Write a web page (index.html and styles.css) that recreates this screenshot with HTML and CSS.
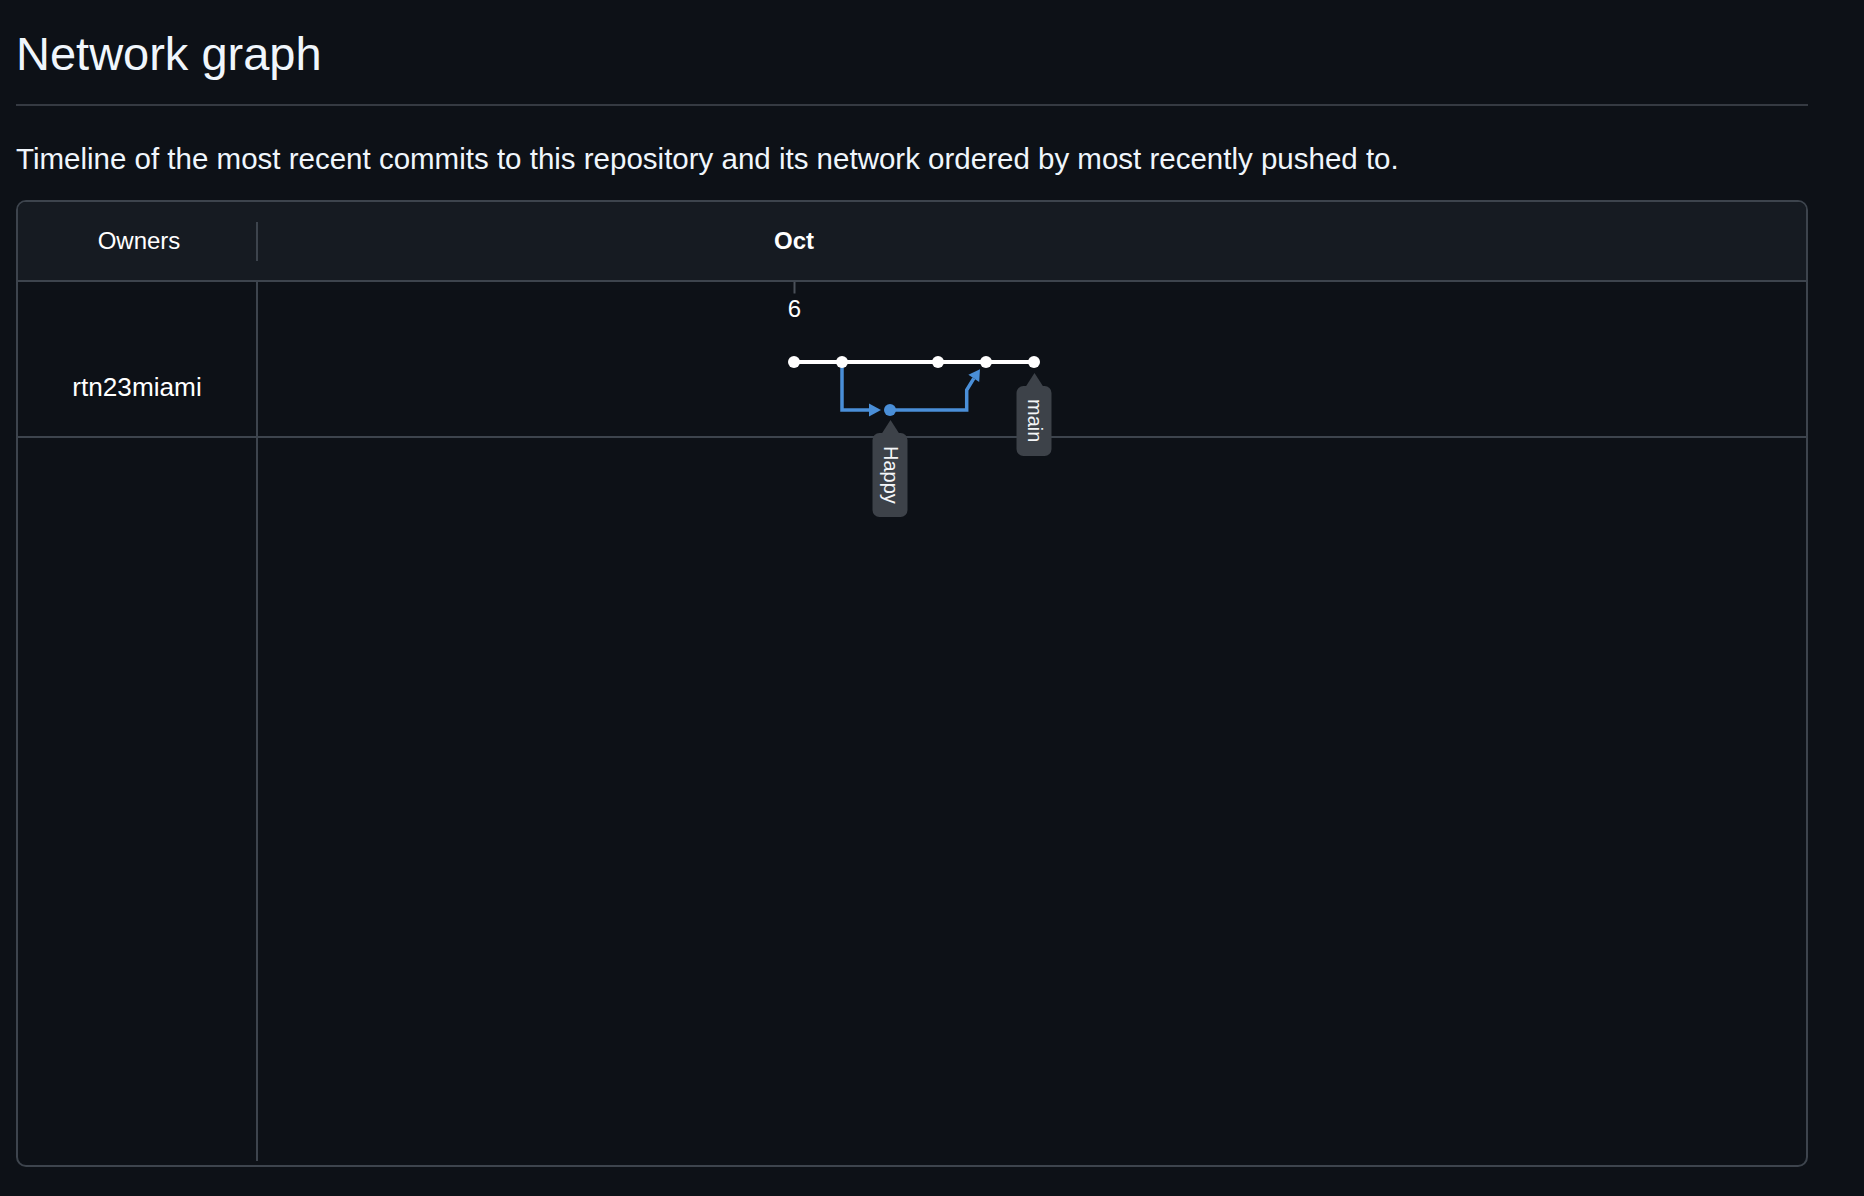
FILE: index.html
```html
<!DOCTYPE html>
<html lang="en">
<head>
<meta charset="utf-8">
<title>Network graph</title>
<link rel="stylesheet" href="styles.css">
</head>
<body>
<div class="page">
  <h1 class="title">Network graph</h1>
  <p class="lead">Timeline of the most recent commits to this repository and its network ordered by most recently pushed to.</p>
  <div class="network">
    <div class="net-head">
      <div class="owners-head">Owners</div>
      <div class="head-sep"></div>
      <div class="months"><span class="month">Oct</span></div>
    </div>
    <div class="net-body">
      <div class="row row-user">
        <div class="owner">rtn23miami</div>
        <div class="lane"></div>
      </div>
      <div class="row row-filler">
        <div class="owner owner-filler"></div>
        <div class="lane"></div>
      </div>
      <div class="canvas">
        <svg class="graph" width="1548" height="300" viewBox="0 0 1548 300" xmlns="http://www.w3.org/2000/svg">
          <line x1="536.5" y1="0" x2="536.5" y2="11.5" stroke="#4a5059" stroke-width="2"/>
          <line x1="536" y1="80" x2="776" y2="80" stroke="#ffffff" stroke-width="4"/>
          <path d="M584 80 V128 H613" fill="none" stroke="#4a8fd8" stroke-width="3.5"/>
          <polygon points="611,121.5 623,128 611,134.5" fill="#4a8fd8"/>
          <path d="M632 128 H708.7 V108 L715.8 96.3" fill="none" stroke="#4a8fd8" stroke-width="3.5"/>
          <polygon points="710.4,92.7 722,87.3 721.2,100" fill="#4a8fd8"/>
          <circle cx="536" cy="80" r="6" fill="#ffffff"/>
          <circle cx="584" cy="80" r="6" fill="#ffffff"/>
          <circle cx="680" cy="80" r="6" fill="#ffffff"/>
          <circle cx="728" cy="80" r="6" fill="#ffffff"/>
          <circle cx="776" cy="80" r="6" fill="#ffffff"/>
          <circle cx="632" cy="128" r="6" fill="#4a8fd8"/>
        </svg>
        <div class="day">6</div>
        <div class="tag tag-main"><div class="tag-box">main</div></div>
        <div class="tag tag-happy"><div class="tag-box">Happy</div></div>
      </div>
    </div>
  </div>
</div>
</body>
</html>
```
FILE: styles.css
```css
* { box-sizing: border-box; }
html, body { margin: 0; padding: 0; background: #0d1117; }
body { font-family: "Liberation Sans", Arial, Helvetica, sans-serif; color: #f0f6fc; }

.page {
  width: 1808px;
  padding-left: 16px;
}

.title {
  margin: 0;
  padding-top: 26px;
  padding-bottom: 22px;
  font-size: 47px;
  line-height: 56px;
  font-weight: 400;
  color: #f0f6fc;
  border-bottom: 2px solid #353a42;
}

.lead {
  margin: 35px 0 0 0;
  font-size: 29.5px;
  line-height: 36px;
  color: #f0f6fc;
}

.network {
  margin-top: 23px;
  height: 967px;
  border: 2px solid #3d444d;
  border-radius: 10px;
  overflow: hidden;
  display: flex;
  flex-direction: column;
  color: #ffffff;
}

.net-head {
  height: 80px;
  flex: none;
  display: flex;
  align-items: center;
  background: #161b22;
  border-bottom: 2px solid #3d444d;
}

.owners-head {
  width: 238px;
  padding-left: 4px;
  text-align: center;
  font-size: 24px;
  line-height: 28px;
}

.head-sep {
  width: 2px;
  height: 39px;
  background: #3d444d;
}

.months {
  flex: 1;
  padding-left: 516px;
  font-size: 24px;
  line-height: 28px;
}

.month { font-weight: 700; }

.net-body {
  flex: 1;
  display: flex;
  flex-direction: column;
  position: relative;
}

.row {
  display: flex;
  border-bottom: 2px solid #3d444d;
}

.row-user { height: 156px; flex: none; }

.row-filler { flex: 1; border-bottom: none; }

.owner {
  width: 240px;
  flex: none;
  border-right: 2px solid #3d444d;
  text-align: center;
  font-size: 26.2px;
  line-height: 30px;
  padding-top: 90px;
}

.owner-filler { margin-bottom: 4px; padding-top: 0; }

.lane { flex: 1; }

.canvas {
  position: absolute;
  left: 240px;
  top: 0;
  width: 1548px;
  height: 300px;
  pointer-events: none;
}

.graph {
  position: absolute;
  left: 0;
  top: 0;
  overflow: visible;
}

.day {
  position: absolute;
  left: 536.5px;
  top: 12.8px;
  transform: translateX(-50%);
  font-size: 24px;
  line-height: 28px;
  color: #ffffff;
}

.tag {
  position: absolute;
  transform: translateX(-50%);
  display: flex;
  flex-direction: column;
  align-items: center;
}

.tag::before {
  content: "";
  display: block;
  width: 0;
  height: 0;
  border-left: 9px solid transparent;
  border-right: 9px solid transparent;
  border-bottom: 14px solid #3d4249;
  margin-bottom: -1px;
}

.tag-box {
  width: 35px;
  padding: 13px 0;
  border-radius: 7px;
  background: #3d4249;
  writing-mode: vertical-rl;
  font-size: 20px;
  line-height: 35px;
  color: #f4f6f8;
  text-align: center;
}

.tag-main { left: 776px; top: 91.3px; }
.tag-happy { left: 632px; top: 138px; }
```
